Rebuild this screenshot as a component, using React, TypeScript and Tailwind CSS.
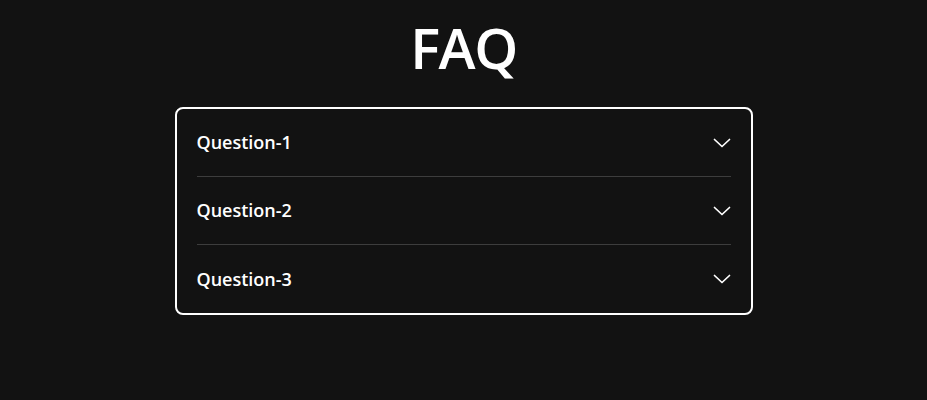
import React from 'react';

const questions = ['Question-1', 'Question-2', 'Question-3'];

const Chevron: React.FC = () => (
    <svg width="18" height="10" viewBox="0 0 18 10" fill="none" className="shrink-0">
        <polyline points="1.5,1.5 9,8.5 16.5,1.5" stroke="#ffffff" strokeWidth="1.7" strokeLinecap="round" strokeLinejoin="round" />
    </svg>
);

const App: React.FC = () => {
    return (
        <div className="min-h-screen w-full bg-[#121212] text-white font-['Open_Sans','Noto_Sans',sans-serif] pt-[14px]">
            <h1 className="text-center text-[56px] leading-[66px] font-semibold tracking-tight">FAQ</h1>

            <div className="mx-auto mt-[27px] w-[578px] rounded-lg border-2 border-white px-5">
                {questions.map((q, i) => (
                    <div
                        key={q}
                        className={`flex h-[68px] items-center justify-between ${i < questions.length - 1 ? 'border-b border-[#3d3d3d]' : ''}`}
                    >
                        <span className="text-[18px] font-semibold">{q}</span>
                        <Chevron />
                    </div>
                ))}
            </div>
        </div>
    );
};

export default App;
